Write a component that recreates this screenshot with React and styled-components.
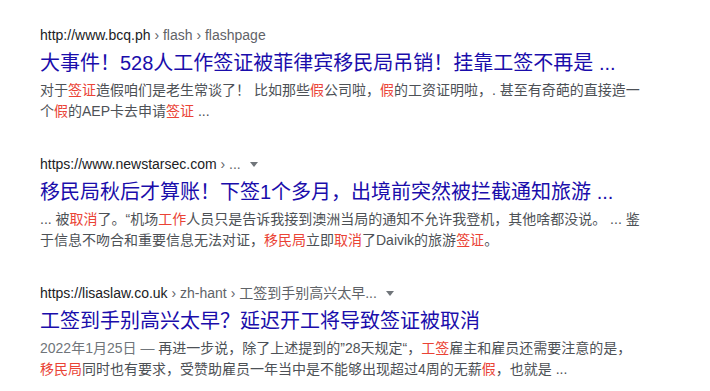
import styled, { createGlobalStyle } from "styled-components";

const GlobalStyle = createGlobalStyle`
  html, body {
    margin: 0;
    padding: 0;
    background: #ffffff;
  }
  body {
    font-family: "Liberation Sans", Arial, "Noto Sans CJK SC", sans-serif;
  }
`;

const results = [
  {
    host: "http://www.bcq.ph",
    crumbs: " › flash › flashpage",
    menu: false,
    title: "大事件！528人工作签证被菲律宾移民局吊销！挂靠工签不再是 ...",
    lines: [
      [
        "对于",
        ["签证"],
        "造假咱们是老生常谈了！ 比如那些",
        ["假"],
        "公司啦，",
        ["假"],
        "的工资证明啦，. 甚至有奇葩的直接造一",
      ],
      ["个", ["假"], "的AEP卡去申请", ["签证"], " ..."],
    ],
  },
  {
    host: "https://www.newstarsec.com",
    crumbs: " › ...",
    menu: true,
    title: "移民局秋后才算账！下签1个多月，出境前突然被拦截通知旅游 ...",
    lines: [
      [
        "... 被",
        ["取消"],
        "了。“机场",
        ["工作"],
        "人员只是告诉我接到澳洲当局的通知不允许我登机，其他啥都没说。 ... 鉴",
      ],
      [
        "于信息不吻合和重要信息无法对证，",
        ["移民局"],
        "立即",
        ["取消"],
        "了Daivik的旅游",
        ["签证"],
        "。",
      ],
    ],
  },
  {
    host: "https://lisaslaw.co.uk",
    crumbs: " › zh-hant › 工签到手别高兴太早...",
    menu: true,
    title: "工签到手别高兴太早？延迟开工将导致签证被取消",
    date: "2022年1月25日 — ",
    lines: [
      [
        "再进一步说，除了上述提到的”28天规定“，",
        ["工签"],
        "雇主和雇员还需要注意的是，",
      ],
      [
        ["移民局"],
        "同时也有要求，受赞助雇员一年当中是不能够出现超过4周的无薪",
        ["假"],
        "，也就是 ...",
      ],
    ],
  },
];

const ResultList = styled.main`
  display: flex;
  flex-direction: column;
  gap: 32px;
  padding: 25px 0 0 40px;
`;

const Result = styled.article`
  display: flex;
  flex-direction: column;
  width: 620px;
`;

const Cite = styled.div`
  display: flex;
  align-items: center;
  height: 20px;
  font-size: 14px;
  line-height: 20px;
  white-space: nowrap;
`;

const Host = styled.span`
  color: #202124;
`;

const Crumbs = styled.span`
  color: #5f6368;
  white-space: pre;
`;

const MenuArrow = styled.span`
  display: inline-block;
  width: 0;
  height: 0;
  margin-left: 9px;
  margin-top: 1px;
  border-left: 4px solid transparent;
  border-right: 4px solid transparent;
  border-top: 5px solid #70757a;
`;

const Title = styled.h3`
  margin: 5px 0 4px;
  font-size: 20px;
  font-weight: 400;
  line-height: 26px;
  color: #1a0dab;
  white-space: nowrap;
`;

const Snippet = styled.div`
  font-size: 14px;
  line-height: 21px;
  color: #4d5156;
`;

const Line = styled.div`
  white-space: nowrap;
`;

const Em = styled.span`
  color: #ea4335;
`;

const DateText = styled.span`
  color: #70757a;
`;

export default function App() {
  return (
    <>
      <GlobalStyle />
      <ResultList>
        {results.map((r, i) => (
          <Result key={i}>
            <Cite>
              <Host>{r.host}</Host>
              <Crumbs>{r.crumbs}</Crumbs>
              {r.menu && <MenuArrow />}
            </Cite>
            <Title>{r.title}</Title>
            <Snippet>
              {r.lines.map((line, j) => (
                <Line key={j}>
                  {j === 0 && r.date && <DateText>{r.date}</DateText>}
                  {line.map((part, k) =>
                    Array.isArray(part) ? (
                      <Em key={k}>{part[0]}</Em>
                    ) : (
                      <span key={k}>{part}</span>
                    ),
                  )}
                </Line>
              ))}
            </Snippet>
          </Result>
        ))}
      </ResultList>
    </>
  );
}
